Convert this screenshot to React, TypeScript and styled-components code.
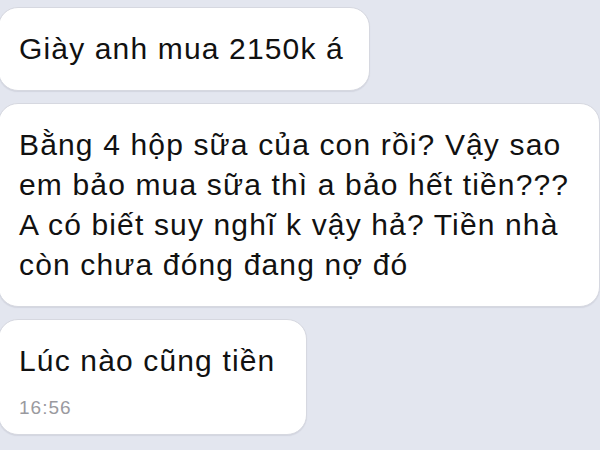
import React from 'react';
import styled, { createGlobalStyle } from 'styled-components';

const GlobalStyle = createGlobalStyle`
    html, body {
        margin: 0;
        padding: 0;
        background: #e3e6ef;
    }
`

const Thread = styled.div`
    width: 600px;
    height: 450px;
    overflow: hidden;
    box-sizing: border-box;
    padding: 7px 0 0 0;
    display: flex;
    flex-direction: column;
    align-items: flex-start;
    gap: 12px;
    background: #e3e6ef;
    font-family: "Liberation Sans", Arial, sans-serif;
`

const Bubble = styled.div<{ $padRight?: number; $padBottom?: number }>`
    box-sizing: border-box;
    width: fit-content;
    margin-left: -2px;
    padding: 21px ${p => p.$padRight ?? 25}px ${p => p.$padBottom ?? 21}px 20px;
    background: #ffffff;
    border: 1px solid #d6d8e0;
    border-radius: 20px;
    box-shadow: 0 1px 1px rgba(120, 124, 140, 0.15);
`

const Text = styled.div`
    font-size: 30px;
    line-height: 40px;
    letter-spacing: 1.15px;
    color: #111111;
    white-space: nowrap;
`

const Time = styled.div`
    margin-top: 15px;
    font-size: 19px;
    line-height: 24px;
    letter-spacing: 1px;
    color: #9a9a9f;
`

const lines = [
    'Bằng 4 hộp sữa của con rồi? Vậy sao',
    'em bảo mua sữa thì a bảo hết tiền???',
    'A có biết suy nghĩ k vậy hả? Tiền nhà',
    'còn chưa đóng đang nợ đó',
];

export default function App() {
    return (
        <>
            <GlobalStyle />
            <Thread>
                <Bubble>
                    <Text>Giày anh mua 2150k á</Text>
                </Bubble>
                <Bubble $padRight={30}>
                    {lines.map(l => (
                        <Text key={l}>{l}</Text>
                    ))}
                </Bubble>
                <Bubble $padRight={31} $padBottom={14}>
                    <Text>Lúc nào cũng tiền</Text>
                    <Time>16:56</Time>
                </Bubble>
            </Thread>
        </>
    );
}
